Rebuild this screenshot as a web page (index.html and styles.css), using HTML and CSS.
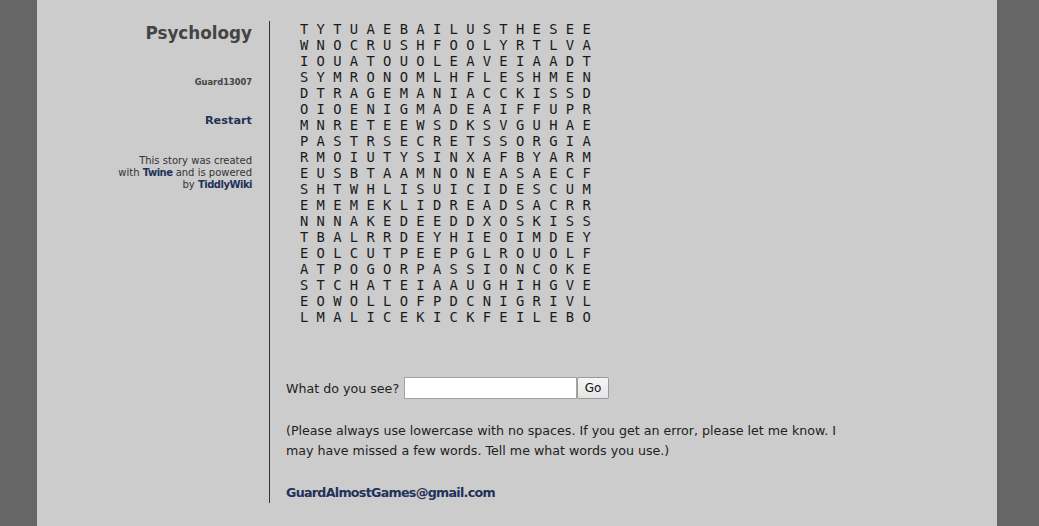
FILE: index.html
```html
<!DOCTYPE html>
<html>
<head>
<meta charset="utf-8">
<title>Psychology</title>
<link rel="stylesheet" href="styles.css">
</head>
<body>
<div class="page">
  <div class="sidebar">
    <h1 class="title">Psychology</h1>
    <div class="author">Guard13007</div>
    <div class="menu"><a class="link" href="#">Restart</a></div>
    <div class="credits">This story was created<br>with <a class="link" href="#">Twine</a> and is powered<br>by <a class="link" href="#">TiddlyWiki</a></div>
  </div>
  <div class="passage">
    <div class="grid">
      <div class="row">T Y T U A E B A I L U S T H E S E E</div>
      <div class="row">W N O C R U S H F O O L Y R T L V A</div>
      <div class="row">I O U A T O U O L E A V E I A A D T</div>
      <div class="row">S Y M R O N O M L H F L E S H M E N</div>
      <div class="row">D T R A G E M A N I A C C K I S S D</div>
      <div class="row">O I O E N I G M A D E A I F F U P R</div>
      <div class="row">M N R E T E E W S D K S V G U H A E</div>
      <div class="row">P A S T R S E C R E T S S O R G I A</div>
      <div class="row">R M O I U T Y S I N X A F B Y A R M</div>
      <div class="row">E U S B T A A M N O N E A S A E C F</div>
      <div class="row">S H T W H L I S U I C I D E S C U M</div>
      <div class="row">E M E M E K L I D R E A D S A C R R</div>
      <div class="row">N N N A K E D E E D D X O S K I S S</div>
      <div class="row">T B A L R R D E Y H I E O I M D E Y</div>
      <div class="row">E O L C U T P E E P G L R O U O L F</div>
      <div class="row">A T P O G O R P A S S I O N C O K E</div>
      <div class="row">S T C H A T E I A A U G H I H G V E</div>
      <div class="row">E O W O L L O F P D C N I G R I V L</div>
      <div class="row">L M A L I C E K I C K F E I L E B O</div>
    </div>
    <div class="ask">
      <span class="label">What do you see?</span>
      <input class="field" type="text">
      <button class="go" type="button">Go</button>
    </div>
    <p class="note">(Please always use lowercase with no spaces. If you get an error, please let me know. I may have missed a few words. Tell me what words you use.)</p>
    <p class="email"><a class="link" href="#">GuardAlmostGames@gmail.com</a></p>
  </div>
</div>
</body>
</html>
```

FILE: styles.css
```css
html, body {
  margin: 0;
  padding: 0;
  background: #666666;
  height: 100%;
}
body {
  font-family: "DejaVu Sans", Verdana, sans-serif;
  color: #222222;
}
.page {
  margin-left: 37px;
  width: 960px;
  min-height: 526px;
  background: #cccccc;
  display: flex;
  align-items: flex-start;
  padding-top: 21px;
  box-sizing: border-box;
}
.link {
  color: #223259;
  font-weight: bold;
  text-decoration: none;
}
.sidebar {
  width: 232px;
  box-sizing: border-box;
  padding-right: 17px;
  text-align: right;
  color: #444444;
}
.title {
  margin: 2px 0 0 0;
  font-size: 16.8px;
  line-height: 20px;
  font-weight: bold;
  color: #444444;
}
.author {
  margin-top: 34px;
  font-size: 8.3px;
  line-height: 10px;
  font-weight: bold;
  color: #444444;
}
.menu {
  margin-top: 26px;
  font-size: 11.3px;
  line-height: 16px;
}
.credits {
  margin-top: 26px;
  font-size: 10px;
  line-height: 12px;
  color: #333333;
}
.credits .link {
  letter-spacing: -0.5px;
}
.passage {
  border-left: 1px solid #333333;
  padding-left: 16px;
  width: 580px;
  font-size: 12.65px;
}
.grid {
  padding-left: 14px;
  font-family: "DejaVu Sans Mono", monospace;
  font-size: 13.8px;
  line-height: 16px;
  color: #1a1a1a;
}
.row {
  white-space: pre;
  height: 16px;
}
.ask {
  margin-top: 52px;
  display: flex;
  align-items: center;
  height: 22px;
}
.label {
  margin-right: 5px;
}
.field {
  width: 173px;
  height: 22px;
  box-sizing: border-box;
  border: 1px solid #a5a5a5;
  background: #ffffff;
  margin: 0;
  padding: 0 2px;
}
.go {
  width: 32px;
  height: 22px;
  box-sizing: border-box;
  margin: 0;
  padding: 0;
  border: 1px solid #9a9a9a;
  border-radius: 2px;
  background: linear-gradient(#f6f6f6, #e4e4e4);
  font-family: "DejaVu Sans", sans-serif;
  font-size: 12px;
  color: #111111;
}
.note {
  margin: 22px 0 0 0;
  line-height: 20px;
}
.email {
  margin: 22px 0 0 0;
  line-height: 20px;
}
.email .link {
  letter-spacing: -0.7px;
}
```
